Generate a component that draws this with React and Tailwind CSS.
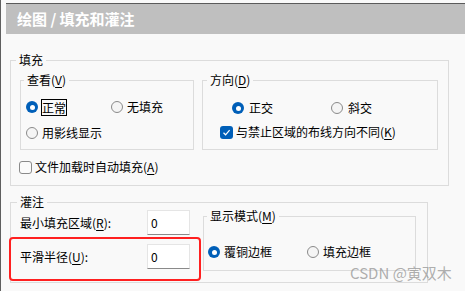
function Radio({ checked }) {
  if (checked) {
    return (
      <span className="w-[12px] h-[12px] shrink-0 rounded-full bg-[#005fb8] flex items-center justify-center">
        <span className="w-[5px] h-[5px] rounded-full bg-white" />
      </span>
    );
  }
  return <span className="w-[12px] h-[12px] shrink-0 rounded-full border border-[#8a8a8a] bg-[#f5f5f5]" />;
}

function Check({ checked }) {
  if (checked) {
    return (
      <span className="w-[13px] h-[13px] shrink-0 rounded-[3px] bg-[#005fb8] flex items-center justify-center">
        <svg width="9" height="9" viewBox="0 0 9 9">
          <path d="M1.5 4.8 L3.6 6.8 L7.6 2.2" fill="none" stroke="white" strokeWidth="1.2" />
        </svg>
      </span>
    );
  }
  return <span className="w-[13px] h-[13px] shrink-0 rounded-[3px] border border-[#8a8a8a] bg-[#fbfbfb]" />;
}

function Key({ k }) {
  return (
    <>
      (<span className="underline underline-offset-2">{k}</span>)
    </>
  );
}

export default function App() {
  return (
    <div className="w-[465px] h-[291px] bg-[#f9f9f9] border-l border-[#5f5f5f] relative overflow-hidden text-[12px] leading-[16px] text-black font-['Microsoft_YaHei','Noto_Sans_CJK_SC',sans-serif]">
      <div className="pt-[3px]">
        <div className="ml-[5px] h-[31px] bg-[#bfbfbf] border-t border-[#5a5a5a] flex items-center pl-[11px] text-white font-bold text-[15px]">
          绘图 / 填充和灌注
        </div>
      </div>

      {/* 填充 */}
      <fieldset className="ml-[9px] mt-[18px] w-[439px] h-[134px] border border-[#dcdcdc]">
        <legend className="ml-[5px] px-[3px] leading-[16px]">填充</legend>
        <div className="flex mt-[4px] ml-[9px]">
          <fieldset className="w-[174px] h-[78px] border border-[#dcdcdc]">
            <legend className="ml-[3px] px-[3px] leading-[16px]">
              查看<Key k="V" />
            </legend>
            <div className="mt-[11px] pl-[5px] flex flex-col gap-[10px]">
              <div className="flex h-[16px] items-center">
                <div className="w-[85px] flex items-center">
                  <Radio checked />
                  <span className="ml-[3px] border border-black leading-[15px]">正常</span>
                </div>
                <div className="flex items-center gap-[4px]">
                  <Radio />
                  <span>无填充</span>
                </div>
              </div>
              <div className="flex h-[16px] items-center gap-[4px]">
                <Radio />
                <span>用影线显示</span>
              </div>
            </div>
          </fieldset>

          <fieldset className="ml-[8px] w-[236px] h-[78px] border border-[#dcdcdc]">
            <legend className="ml-[4px] px-[3px] leading-[16px]">
              方向<Key k="D" />
            </legend>
            <div className="mt-[12px] flex flex-col gap-[8px]">
              <div className="flex h-[16px] items-center pl-[29px]">
                <div className="w-[99px] flex items-center gap-[5px]">
                  <Radio checked />
                  <span>正交</span>
                </div>
                <div className="flex items-center gap-[5px]">
                  <Radio />
                  <span>斜交</span>
                </div>
              </div>
              <div className="flex h-[16px] items-center pl-[17px] gap-[3px]">
                <Check checked />
                <span>
                  与禁止区域的布线方向不同<Key k="K" />
                </span>
              </div>
            </div>
          </fieldset>
        </div>

        <div className="mt-[9px] ml-[8px] flex items-center h-[16px] gap-[3px]">
          <Check />
          <span>
            文件加载时自动填充<Key k="A" />
          </span>
        </div>
      </fieldset>

      {/* 灌注 */}
      <fieldset className="ml-[9px] mt-[8px] w-[418px] h-[89px] border border-[#dcdcdc]">
        <legend className="ml-[6px] px-[3px] leading-[16px]">灌注</legend>
        <div className="flex">
          <div className="pl-[9px] flex flex-col gap-[9px]">
            <div className="flex items-center h-[25px]">
              <span className="w-[127px]">
                最小填充区域<Key k="R" />:
              </span>
              <div className="w-[43px] h-[25px] bg-white border border-[#e5e5e5] border-b-[#8a8a8a] pl-[3px] flex items-center">
                0
              </div>
            </div>
            <div className="flex items-center h-[25px]">
              <span className="w-[127px]">
                平滑半径<Key k="U" />:
              </span>
              <div className="w-[43px] h-[25px] bg-white border border-[#e5e5e5] border-b-[#8a8a8a] pl-[3px] flex items-center">
                0
              </div>
            </div>
          </div>

          <fieldset className="ml-[13px] -mt-[2px] w-[213px] h-[63px] border border-[#dcdcdc]">
            <legend className="ml-[3px] px-[3px] leading-[16px]">
              显示模式<Key k="M" />
            </legend>
            <div className="mt-[20px] pl-[4px] flex h-[16px] items-center">
              <div className="w-[99px] flex items-center gap-[4px]">
                <Radio checked />
                <span>覆铜边框</span>
              </div>
              <div className="flex items-center gap-[4px]">
                <Radio />
                <span>填充边框</span>
              </div>
            </div>
          </fieldset>
        </div>
      </fieldset>

      {/* annotation overlay */}
      <div className="absolute left-[8px] top-[237px] w-[192px] h-[44px] border-2 border-[#ff2020] rounded-[4px]" />

      <div className="absolute left-[349px] top-[263px] text-[15px] leading-[19px] text-[#999999]/80 font-['Microsoft_YaHei','Noto_Sans_CJK_SC',sans-serif]">
        CSDN @寅双木
      </div>
    </div>
  );
}
